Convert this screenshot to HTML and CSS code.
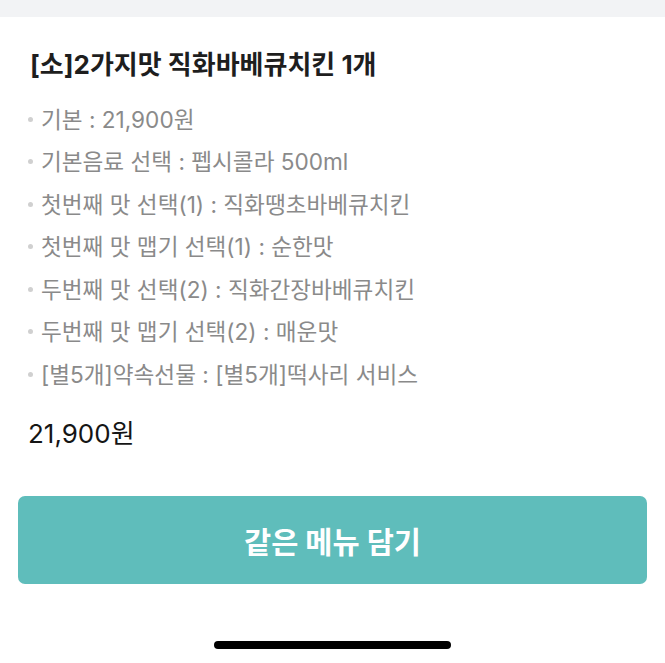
FILE: index.html
```html
<!DOCTYPE html>
<html lang="ko">
<head>
<meta charset="utf-8">
<link rel="stylesheet" href="styles.css">
</head>
<body>
<div class="topbar"></div>
<main class="content">
  <h1 class="title">[소]2가지맛 직화바베큐치킨 1개</h1>
  <ul class="options">
    <li>기본 : 21,900원</li>
    <li>기본음료 선택 : 펩시콜라 500ml</li>
    <li>첫번째 맛 선택(1) : 직화땡초바베큐치킨</li>
    <li>첫번째 맛 맵기 선택(1) : 순한맛</li>
    <li>두번째 맛 선택(2) : 직화간장바베큐치킨</li>
    <li>두번째 맛 맵기 선택(2) : 매운맛</li>
    <li>[별5개]약속선물 : [별5개]떡사리 서비스</li>
  </ul>
  <div class="price">21,900원</div>
</main>
<div class="actions">
  <button class="add-btn">같은 메뉴 담기</button>
</div>
<div class="home-wrap"><div class="home-indicator"></div></div>
</body>
</html>
```
FILE: styles.css
```css
* { box-sizing: border-box; }
html, body {
  margin: 0;
  padding: 0;
  background: #ffffff;
  font-family: Inter, "Noto Sans CJK KR", sans-serif;
}
.topbar {
  height: 17px;
  background: #f2f3f5;
}
.content {
  padding: 0 28px 0 28px;
}
.title {
  margin: 31px 0 0 2px;
  font-size: 26px;
  line-height: 34px;
  font-weight: 700;
  color: #1e1e1e;
  letter-spacing: 0;
}
.options {
  list-style: none;
  margin: 15px 0 0 0;
  padding: 0;
}
.options li {
  display: flex;
  align-items: center;
  height: 42.5px;
  font-size: 22.6px;
  color: #8a8a8a;
  letter-spacing: 0;
}
.options li::before {
  content: "";
  width: 5px;
  height: 5px;
  border-radius: 50%;
  background: #d0d0d0;
  margin: 2px 8px 0 0;
  flex: none;
}
.price {
  margin-top: 21px;
  font-size: 26px;
  line-height: 36px;
  color: #151515;
  letter-spacing: 0;
}
.actions {
  padding: 44px 18px 0 18px;
}
.add-btn {
  display: block;
  width: 100%;
  height: 88px;
  border: none;
  border-radius: 7px;
  background: #5fbdbb;
  color: #ffffff;
  font-family: Inter, "Noto Sans CJK KR", sans-serif;
  font-size: 29.5px;
  font-weight: 700;
  letter-spacing: 0;
}
.home-wrap {
  display: flex;
  justify-content: center;
  padding-top: 57px;
}
.home-indicator {
  width: 237px;
  height: 8px;
  border-radius: 4px;
  background: #000;
}
```
